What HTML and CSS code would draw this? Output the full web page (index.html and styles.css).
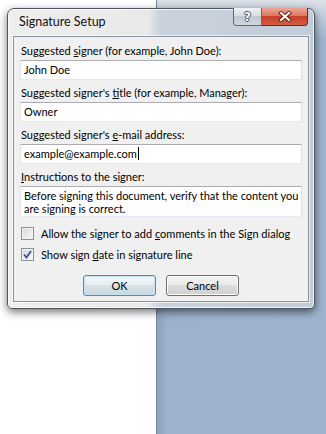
FILE: index.html
```html
<!DOCTYPE html>
<html lang="en">
<head>
  <meta charset="UTF-8">
  <title>Signature Setup</title>
  <meta name="viewport" content="width=device-width, initial-scale=1.0">
  <link rel="stylesheet" href="styles.css">
</head>
<body>

  <div class="dialog">
    <div class="titlebar">
      <span class="title">Signature Setup</span>
      <div class="caption">
        <span class="cap-btn help">?</span>
        <span class="cap-btn close">
          <svg width="14" height="11" viewBox="0 0 14 11">
            <path d="M3 2 L11 9 M11 2 L3 9" stroke="#5a1a12" stroke-width="4" stroke-linecap="square"/>
            <path d="M3 2 L11 9 M11 2 L3 9" stroke="#fff" stroke-width="2.2" stroke-linecap="square"/>
          </svg>
        </span>
      </div>
    </div>

    <div class="client">
      <div class="lbl first">Suggested <u>s</u>igner (for example, John Doe):</div>
      <div class="field">John Doe</div>

      <div class="lbl">Suggested signer's <u>t</u>itle (for example, Manager):</div>
      <div class="field">Owner</div>

      <div class="lbl">Suggested signer's <u>e</u>-mail address:</div>
      <div class="field">example@example.com<span class="caret"></span></div>

      <div class="lbl"><u>I</u>nstructions to the signer:</div>
      <div class="field multi">Before signing this document, verify that the content you are signing is correct.</div>

      <div class="check">
        <span class="box"></span>
        <span>Allow the signer to add <u>c</u>omments in the Sign dialog</span>
      </div>
      <div class="check">
        <span class="box">
          <svg width="11" height="11" viewBox="0 0 11 11">
            <path d="M2 5.5 L4.5 8.5 L9 2" fill="none" stroke="#3d4f86" stroke-width="1.8"/>
          </svg>
        </span>
        <span>Show sign <u>d</u>ate in signature line</span>
      </div>

      <div class="buttons">
        <button class="btn default">OK</button>
        <button class="btn">Cancel</button>
      </div>
    </div>
  </div>

</body>
</html>
```

FILE: styles.css
```css
html, body {
  margin: 0;
  height: 100%;
}

body {
  width: 326px;
  height: 434px;
  overflow: hidden;
  box-sizing: border-box;
  padding: 8px 0 0 7px;
  font-family: Lato, "Open Sans", sans-serif;
  font-size: 11px;
  color: #000;
  background:
    linear-gradient(rgba(226, 230, 235, 0.9), rgba(226, 230, 235, 0)) right top / 169px 40px no-repeat,
    linear-gradient(to right, #fff 0, #fff 156px, #76879d 156px, #76879d 157px, #8ba1bf 157px, #9cb2ce 168px, #9db3cf 100%);
}

/* window frame */
.dialog {
  box-sizing: border-box;
  width: 308px;
  height: 301px;
  border: 1px solid #4f545b;
  border-radius: 7px 7px 5px 5px;
  padding: 0 5px 6px;
  display: flex;
  flex-direction: column;
  background: linear-gradient(to right, #eeeeee 0, #e9e9e9 140px, #c9d2dc 152px, #c2ccd8 100%);
  box-shadow: 0 3px 9px rgba(0, 0, 0, 0.55), inset 0 0 0 1px rgba(255, 255, 255, 0.75);
}

.titlebar {
  height: 27px;
  display: flex;
  justify-content: space-between;
  align-items: flex-start;
}

.title {
  padding: 5px 0 0 6px;
  font-size: 12.5px;
  line-height: 16px;
  color: #111;
}

.caption {
  display: flex;
  margin: -1px 1px 0 0;
}

.cap-btn {
  box-sizing: border-box;
  height: 18px;
  border: 1px solid #5f6770;
  border-top: none;
  display: flex;
  align-items: center;
  justify-content: center;
}

.help {
  width: 29px;
  border-radius: 0 0 0 4px;
  background: linear-gradient(#eef1f4 0, #d9dee4 45%, #c1c8d1 50%, #d0d6dd 100%);
  color: #fff;
  font-family: "DejaVu Sans", sans-serif;
  font-weight: bold;
  font-size: 12px;
  text-shadow: 1px 0 #4b5560, -1px 0 #4b5560, 0 1px #4b5560, 0 -1px #4b5560;
}

.close {
  width: 46px;
  border-left: none;
  border-color: #6e2a20;
  border-radius: 0 0 4px 0;
  background: linear-gradient(#eca698 0, #dc7763 45%, #c7402a 50%, #d45d44 100%);
}

/* client area */
.client {
  flex: 1;
  border: 1px solid #8b95a1;
  background: #f0f0f0;
  padding: 6px 6px 0;
  box-shadow: 0 0 0 1px rgba(255, 255, 255, 0.6);
}

.lbl {
  line-height: 15px;
  padding-left: 1px;
  margin-top: 5px;
}

.lbl.first {
  margin-top: 0;
}

.field {
  box-sizing: border-box;
  height: 20px;
  margin-top: 2px;
  padding: 0 3px;
  line-height: 18px;
  background: #fff;
  border: 1px solid;
  border-color: #abadb3 #dbdfe6 #e3e9ef #e2e3ea;
  white-space: nowrap;
}

.field.multi {
  height: 31px;
  padding: 2px 1px 0 3px;
  line-height: 13px;
  white-space: normal;
}

.caret {
  display: inline-block;
  width: 1px;
  height: 13px;
  margin-left: 1px;
  vertical-align: -2px;
  background: #000;
}

.check {
  display: flex;
  align-items: center;
  gap: 7px;
  height: 13px;
  margin: 10px 0 0 1px;
  white-space: nowrap;
}

.check + .check {
  margin-top: 8px;
}

.box {
  box-sizing: border-box;
  width: 13px;
  height: 13px;
  border: 1px solid #8e8f8f;
  background: linear-gradient(135deg, #d8d8d8, #f7f7f7);
  box-shadow: inset 0 0 0 1px #f4f4f4;
  display: flex;
  align-items: center;
  justify-content: center;
}

.buttons {
  display: flex;
  justify-content: center;
  gap: 10px;
  margin-top: 14px;
}

.btn {
  width: 73px;
  height: 21px;
  padding: 0;
  font: inherit;
  color: #000;
  border: 1px solid #707070;
  border-radius: 3px;
  background: linear-gradient(#f2f2f2 0, #ebebeb 50%, #dddddd 50%, #cfcfcf 100%);
  box-shadow: inset 0 0 0 1px #fbfbfb;
}

.btn.default {
  border-color: #4a8ec0;
  background: linear-gradient(#f1f5f8 0, #e8eef2 50%, #d8e2e8 50%, #cbd8e0 100%);
  box-shadow: inset 0 0 0 1px #c4e4f6;
}
```
